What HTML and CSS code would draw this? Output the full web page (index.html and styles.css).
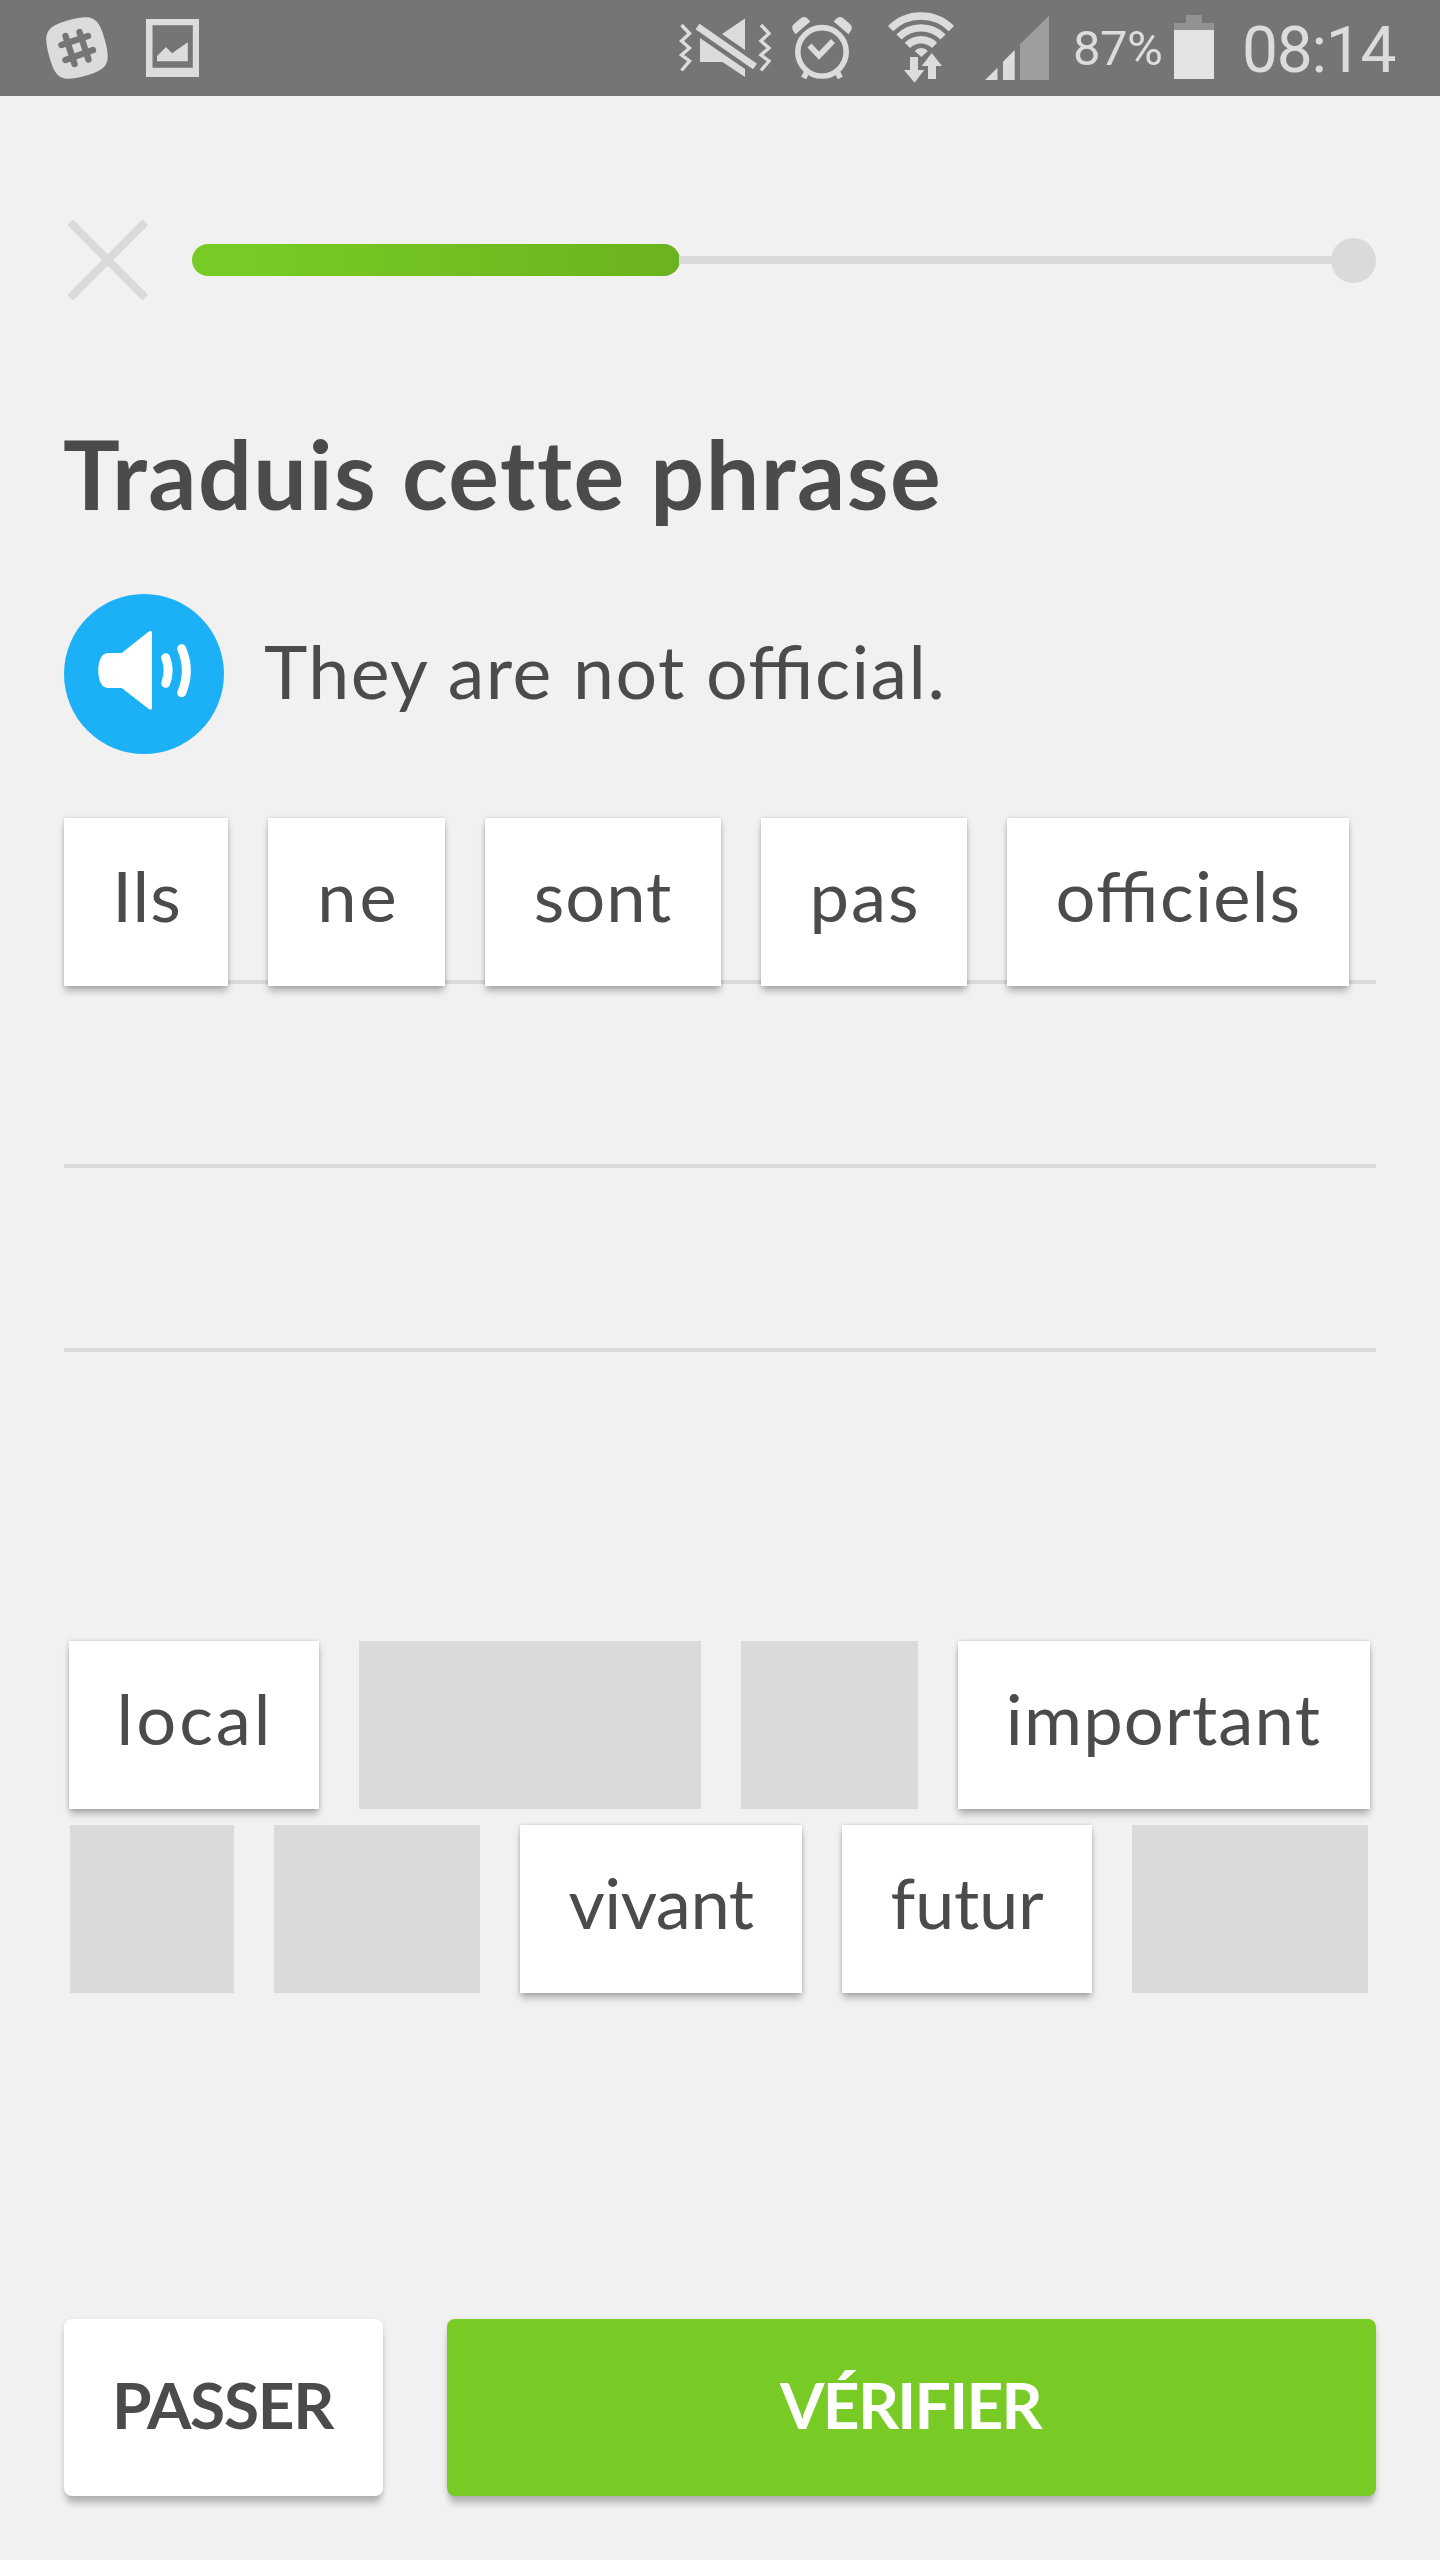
FILE: index.html
```html
<!DOCTYPE html>
<html lang="fr">
<head>
<meta charset="utf-8">
<title>Traduis cette phrase</title>
<link rel="stylesheet" href="styles.css">
</head>
<body>
<div class="screen">
  <header class="status">
    <div class="status-left">
      <svg width="62" height="96" viewBox="46 0 62 96">
        <path class="lit" transform="translate(77 48) rotate(-15)" d="M-29 0C-29-24-24-29 0-29S29-24 29 0 24 29 0 29-29 24-29 0Z"/>
        <path class="cut" d="M61.500 45 88 36M65.500 60 93 50M65.500 36 74.500 64M79.500 32 88.500 59.500"/>
      </svg>
      <svg width="53" height="96" viewBox="146 0 53 96">
        <path class="lit" fill-rule="evenodd" d="M146 19h53v58h-53zM152.500 25.300v42.400h40.300V25.300z"/>
        <path class="lit" d="M157 61.300V56l9-9 6 6.300 15.800-11v19z"/>
      </svg>
    </div>
    <div class="status-right">
      <svg class="vibrate" width="93" height="96" viewBox="679 0 93 96">
        <path class="line thin" d="M681.500 25l8 8.500-8 7.500 8 7-8 7 8 6-8 9.500M761 25l8 8.500-8 7.500 8 7-8 7 8 6-8 9.500"/>
        <path class="lit" d="M722 34l23-15.500V50zM700 38l45 31v8l-22.500-15H700z"/>
        <path class="line slash" d="M697.500 26.500 755 66.500"/>
      </svg>
      <svg class="alarm" width="60" height="96" viewBox="792 0 60 96">
        <circle class="line ring" cx="822" cy="51.800" r="24.200"/>
        <path class="line ring" d="M809.500 45.500l9.500 10.200 14-14.700M807.500 70.500l-3.800 7.500M836.500 70.500l3.800 7.500"/>
        <path class="lit" d="M795.500 34.300l-2-3Q790.500 27 794.500 23.500l6-5Q804.500 15.500 808 19l2.300 2.500zM848.500 34.300l2-3Q853.500 27 849.500 23.500l-6-5Q839.500 15.500 836 19l-2.300 2.500z"/>
      </svg>
      <svg class="wifi" width="68" height="96" viewBox="887 0 68 96">
        <path class="line wave" d="M890.600 28.600a43 43 0 0 1 60.800 0M899 37a31.200 31.200 0 0 1 44 0M907.400 45.400a19.300 19.300 0 0 1 27.200 0"/>
        <path class="lit" d="M921.300 57l-6.600-6a9 9 0 0 1 13.200 0zM910 57h8v13h6.300l-9.800 12.700L904 70h6zM928 79V66h-6.300l10-13L942 66h-6v13z"/>
      </svg>
      <svg class="signal" width="64" height="96" viewBox="985 0 64 96">
        <path class="lit" d="M985 80l12.500-12.300V80zM1003 80V61.700L1014.700 50v30z"/>
        <path class="dim" d="M1020 80V44.300l29-28.600V80z"/>
      </svg>
      <span class="percent">87%</span>
      <svg class="battery" width="40" height="96" viewBox="1174 0 40 96">
        <path fill="#929292" d="M1174 30v-7h12v-8h16v8h12v7z"/>
        <path fill="#e3e3e3" d="M1174 30h40v49h-40z"/>
      </svg>
      <span class="clock">08:14</span>
    </div>
  </header>

  <div class="lesson-bar">
    <svg class="close" width="80" height="80" viewBox="0 0 80 80"><path d="M2.200 2.200 77.300 77.700M77.300 2.200 2.200 77.700"/></svg>
    <div class="progress">
      <div class="progress-fill"></div>
      <div class="progress-track"></div>
      <div class="progress-end"></div>
    </div>
  </div>

  <h1 class="title">Traduis cette phrase</h1>

  <div class="prompt">
    <svg class="speaker" width="160" height="160" viewBox="0 0 160 160">
      <circle cx="80" cy="80" r="80" fill="#1cb0f6"/>
      <path fill="#fff" d="M57.700 59H44C37 59 34.300 68 34.300 76.500S37 94 44 94h13.700L84.500 114.800Q88 117 88 113.500V39Q88 35.500 84.500 37.800z"/>
      <path class="sound" d="M101.700 63.700Q106.700 76.500 101.700 89.300M117.700 54.700Q127 76.700 117.700 98.700"/>
    </svg>
    <p class="sentence">They are not official.</p>
  </div>

  <div class="answer">
    <div class="answer-line">
      <span class="tile w-ils">Ils</span>
      <span class="tile w-ne">ne</span>
      <span class="tile w-sont">sont</span>
      <span class="tile w-pas">pas</span>
      <span class="tile w-officiels">officiels</span>
    </div>
    <div class="answer-line"></div>
    <div class="answer-line"></div>
  </div>

  <div class="bank">
    <div class="bank-row">
      <span class="tile w-local">local</span>
      <span class="slot s-officiels"></span>
      <span class="slot s-ne"></span>
      <span class="tile w-important">important</span>
    </div>
    <div class="bank-row">
      <span class="slot s-ils"></span>
      <span class="slot s-pas"></span>
      <span class="tile w-vivant">vivant</span>
      <span class="tile w-futur">futur</span>
      <span class="slot s-sont"></span>
    </div>
  </div>

  <footer class="actions">
    <button class="btn skip">PASSER</button>
    <button class="btn check">VÉRIFIER</button>
  </footer>
</div>
</body>
</html>
```
FILE: styles.css
```css
* { box-sizing: border-box; }
body { margin: 0; background: #f1f1f1; color: #4b4b4b; font-family: Lato, "Noto Sans", sans-serif; }
svg { display: block; flex: none; }
.screen { width: 1440px; height: 2560px; display: flex; flex-direction: column; overflow: hidden; }

.status { height: 96px; flex: none; background: #757575; color: #dcdcdc; display: flex; justify-content: space-between; padding: 0 40px 0 46px; font-family: Roboto, sans-serif; }
.status-left { display: flex; gap: 38px; }
.status-right { display: flex; width: 721px; }
.lit { fill: #dcdcdc; }
.dim { fill: #9e9e9e; }
.cut { fill: none; stroke: #757575; stroke-width: 6.4; stroke-linecap: round; }
.line { fill: none; stroke: #dcdcdc; }
.thin { stroke-width: 3.4; }
.slash { stroke-width: 7; }
.ring { stroke-width: 5.6; }
.wave { stroke-width: 7.4; }
.alarm { margin-left: 20px; }
.wifi { margin-left: 35px; }
.signal { margin-left: 30px; }
.percent { width: 101px; margin-left: 24px; font-size: 49px; line-height: 98px; letter-spacing: -.5px; }
.clock { margin-left: 28px; font-size: 64px; line-height: 102px; letter-spacing: -1.2px; white-space: nowrap; }

.lesson-bar { display: flex; align-items: center; justify-content: space-between; height: 80px; margin: 124px 64px 0 68px; }
.close path { stroke: #dadada; stroke-width: 8; }
.progress { width: 1184px; display: flex; align-items: center; }
.progress-fill { width: 488px; height: 32px; border-radius: 16px; background: linear-gradient(90deg, #78cb25 8%, #6ab21f); }
.progress-track { flex: 1; height: 8px; background: #dadada; margin: 0 -2px 0 -1px; }
.progress-end { width: 45px; height: 45px; border-radius: 50%; background: #dadada; }

.title { margin: 116px 0 0 63px; font-size: 95px; font-weight: 700; line-height: 114px; letter-spacing: 1.5px; font-variant-ligatures: none; }
.prompt { display: flex; margin: 64px 0 0 64px; height: 160px; }
.sound { fill: none; stroke: #fff; stroke-width: 9; stroke-linecap: round; }
.sentence { margin: 0 0 0 40px; font-size: 73.5px; line-height: 153px; letter-spacing: 1.45px; font-feature-settings: "liga" 1; }

.answer { margin: 46px 64px 0; }
.answer-line { height: 184px; padding-top: 18px; border-bottom: 4px solid #dadada; display: flex; gap: 40px; }
.tile { height: 168px; flex: none; background: #fff; text-align: center; font-size: 70.5px; line-height: 153px; letter-spacing: 1px; font-feature-settings: "liga" 1; box-shadow: 0 6px 7px -1px rgba(0, 0, 0, .27), 0 0 4px rgba(0, 0, 0, .16); }
.slot { height: 168px; flex: none; background: #dadada; }
.w-ils { width: 164px; padding-left: 2px; }
.w-ne { width: 177px; padding-left: 4px; letter-spacing: 3px; }
.w-sont { width: 236px; }
.w-pas { width: 206px; padding-left: 2px; letter-spacing: 2px; }
.w-officiels { width: 342px; padding-left: 1px; letter-spacing: 1.3px; }
.w-local { width: 250px; padding-left: 3px; letter-spacing: 3px; }
.w-important { width: 412px; letter-spacing: 1.2px; }
.w-vivant { width: 282px; letter-spacing: -.5px; }
.w-futur { width: 250px; letter-spacing: -.3px; }
.s-ils { width: 164px; }
.s-ne { width: 177px; }
.s-sont { width: 236px; }
.s-pas { width: 206px; }
.s-officiels { width: 342px; }

.bank { display: flex; flex-direction: column; gap: 16px; margin: 289px 2px 0 0; }
.bank-row { display: flex; justify-content: center; gap: 40px; }

.actions { display: flex; gap: 64px; margin: 326px 64px 0; }
.btn { height: 177px; border: 0; border-radius: 8px; padding: 0 2px 6px 0; font-family: inherit; font-size: 64px; font-weight: 700; line-height: 171px; text-align: center; box-shadow: 0 10px 6px -2px rgba(0, 0, 0, .2), 0 2px 6px rgba(0, 0, 0, .12); }
.skip { width: 319px; background: #fff; color: #4b4b4b; letter-spacing: -1.3px; }
.check { flex: 1; background: #78cb25; color: #fff; letter-spacing: -1.7px; }
```
